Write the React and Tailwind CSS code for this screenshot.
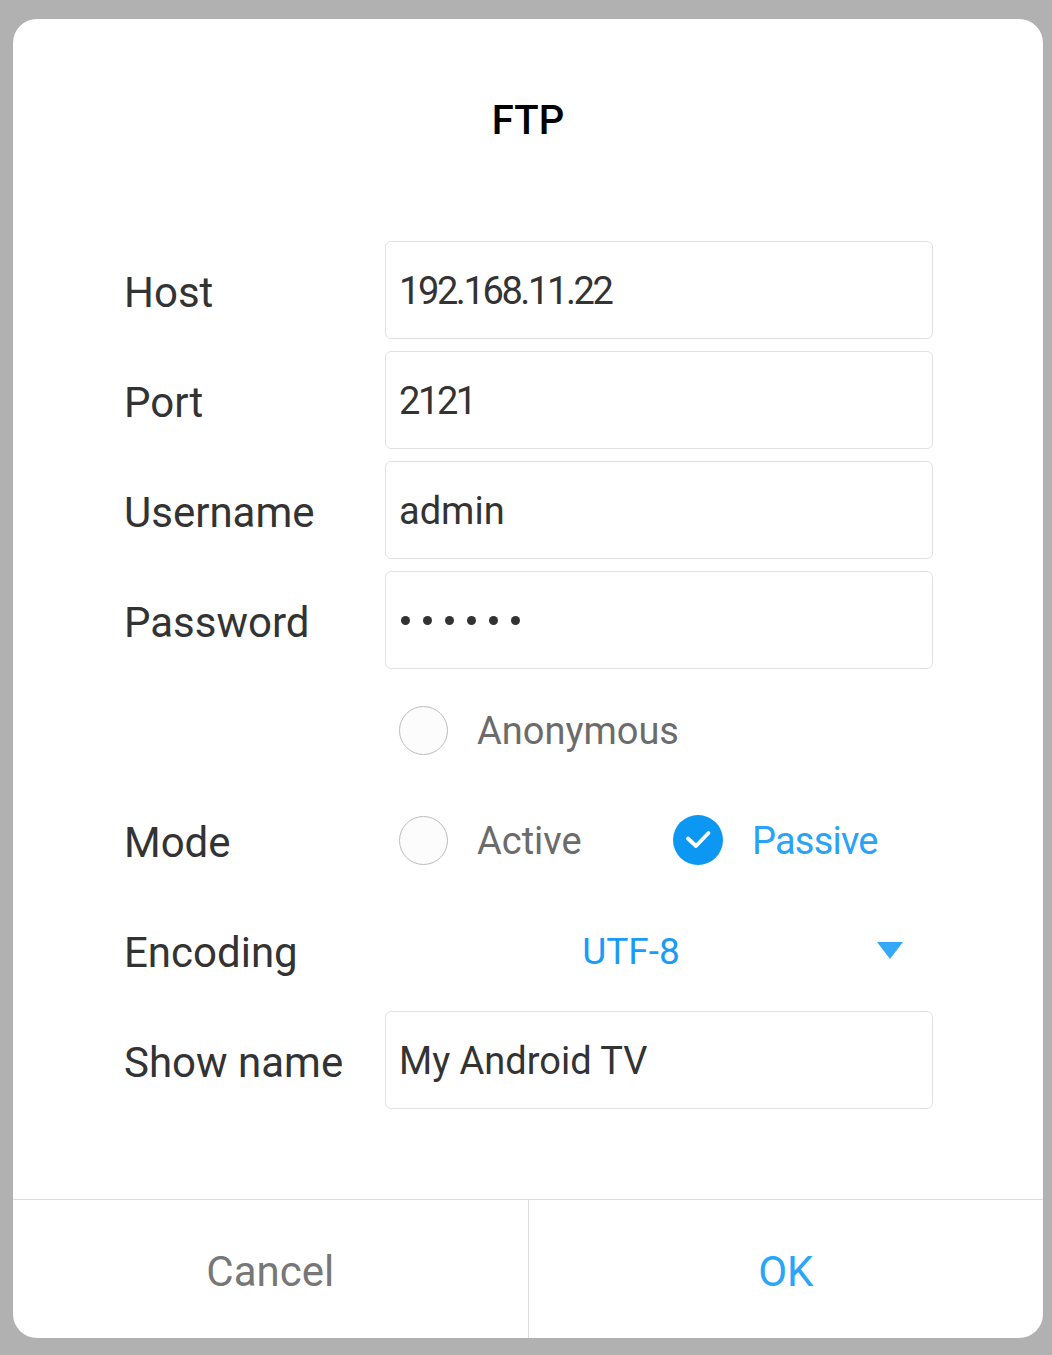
import React, { useState } from "react";

const FIELDS = [
  { label: "Host", value: "192.168.11.22", numeric: true },
  { label: "Port", value: "2121", numeric: true },
  { label: "Username", value: "admin" },
];

const Radio = ({ checked }) =>
  checked ? (
    <span className="flex h-[50px] w-[50px] shrink-0 items-center justify-center rounded-full bg-[#0b97f2]">
      <svg width="32" height="32" viewBox="0 0 32 32" fill="none">
        <path d="M6 14.5l8 7.5L26.5 9" stroke="#fff" strokeWidth="3.8" strokeLinecap="round" strokeLinejoin="round" />
      </svg>
    </span>
  ) : (
    <span className="block h-[49px] w-[49px] shrink-0 rounded-full border-[1.5px] border-[#bcbcbc] bg-[#fbfcfb]" />
  );

const Row = ({ label, children }) => (
  <div className="flex h-[98px] items-center">
    <div className="w-[261px] shrink-0 pt-[4px] text-[42px] text-[#333]">{label}</div>
    <div className="flex h-full flex-1 items-center">{children}</div>
  </div>
);

const Field = ({ children, numeric }) => (
  <div
    className={`flex h-full w-full items-center rounded-[6px] border border-[#e2e2e2] bg-white pl-[13px] pt-[3px] text-[38px] text-[#333] ${
      numeric ? "tracking-[-2.4px]" : ""
    }`}
  >
    {children}
  </div>
);

export default function App() {
  const [mode, setMode] = useState("passive");

  return (
    <div className="min-h-[1355px] bg-[#b1b1b1] pt-[19px]" style={{ fontFamily: "Roboto, 'Noto Sans', sans-serif" }}>
      <div className="ml-[13px] flex h-[1319px] w-[1030px] flex-col rounded-[24px] bg-white">
        <div className="pt-[80px] text-center text-[40px] font-medium leading-[44px] text-black">FTP</div>

        <div className="mt-[98px] flex flex-col gap-[12px] pl-[111px] pr-[110px]">
          {FIELDS.map((f) => (
            <Row key={f.label} label={f.label}>
              <Field numeric={f.numeric}>{f.value}</Field>
            </Row>
          ))}
          <Row label="Password">
            <Field>
              <div className="flex gap-[13px] pb-[3px] pl-[2px]">
                {[0, 1, 2, 3, 4, 5].map((i) => (
                  <span key={i} className="block h-[9px] w-[9px] rounded-full bg-[#333]" />
                ))}
              </div>
            </Field>
          </Row>
          <Row label="">
            <div className="flex items-center gap-[29px] pl-[14px]">
              <Radio checked={false} />
              <span className="pt-[3px] text-[38px] text-[#6b6b6b]">Anonymous</span>
            </div>
          </Row>
          <Row label="Mode">
            <div className="flex items-center pl-[14px]">
              <button className="flex w-[274px] items-center gap-[29px]" onClick={() => setMode("active")}>
                <Radio checked={mode === "active"} />
                <span className={`pt-[3px] text-[38px] ${mode === "active" ? "text-[#2aa3f6]" : "text-[#6b6b6b]"}`}>
                  Active
                </span>
              </button>
              <button className="flex items-center gap-[29px]" onClick={() => setMode("passive")}>
                <Radio checked={mode === "passive"} />
                <span
                  className={`pt-[3px] text-[38px] tracking-[-0.8px] ${
                    mode === "passive" ? "text-[#2aa3f6]" : "text-[#6b6b6b]"
                  }`}
                >
                  Passive
                </span>
              </button>
            </div>
          </Row>
          <Row label="Encoding">
            <div className="flex w-full items-center pr-[30px]">
              <span className="flex-1 pt-[3px] text-center text-[37px] text-[#1a9bf5]">UTF-8</span>
              <svg width="26" height="17" viewBox="0 0 26 17">
                <path d="M0 0h26L13 17z" fill="#35a8f7" />
              </svg>
            </div>
          </Row>
          <Row label="Show name">
            <Field>My Android TV</Field>
          </Row>
        </div>

        <div className="mt-auto flex h-[139px] border-t border-[#dcdcdc]">
          <button className="flex flex-1 items-center justify-center border-r border-[#dcdcdc] pt-[4px] text-[42px] text-[#777]">
            Cancel
          </button>
          <button className="flex flex-1 items-center justify-center pt-[4px] text-[42px] text-[#2aa6f9]">OK</button>
        </div>
      </div>
    </div>
  );
}
